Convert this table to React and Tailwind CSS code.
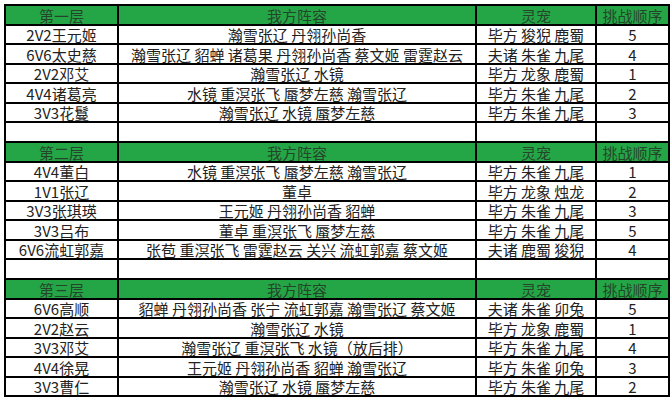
import React from "react";

const floors = [
  {
    title: "第一层",
    rows: [
      ["2V2王元姬", "瀚雪张辽 丹翎孙尚香", "毕方 狻猊 鹿蜀", "5"],
      ["6V6太史慈", "瀚雪张辽 貂蝉 诸葛果 丹翎孙尚香 蔡文姬 雷霆赵云", "夫诸 朱雀 九尾", "4"],
      ["2V2邓艾", "瀚雪张辽 水镜", "毕方 龙象 鹿蜀", "1"],
      ["4V4诸葛亮", "水镜 重溟张飞 蜃梦左慈 瀚雪张辽", "毕方 朱雀 九尾", "2"],
      ["3V3花鬘", "瀚雪张辽 水镜 蜃梦左慈", "毕方 朱雀 九尾", "3"],
    ],
  },
  {
    title: "第二层",
    rows: [
      ["4V4董白", "水镜 重溟张飞 蜃梦左慈 瀚雪张辽", "毕方 朱雀 九尾", "1"],
      ["1V1张辽", "董卓", "毕方 龙象 烛龙", "2"],
      ["3V3张琪瑛", "王元姬 丹翎孙尚香 貂蝉", "毕方 朱雀 九尾", "3"],
      ["3V3吕布", "董卓 重溟张飞 蜃梦左慈", "毕方 朱雀 九尾", "5"],
      ["6V6流虹郭嘉", "张苞 重溟张飞 雷霆赵云 关兴 流虹郭嘉 蔡文姬", "夫诸 鹿蜀 狻猊", "4"],
    ],
  },
  {
    title: "第三层",
    rows: [
      ["6V6高顺", "貂蝉 丹翎孙尚香 张宁 流虹郭嘉 瀚雪张辽 蔡文姬", "夫诸 朱雀 卯兔", "5"],
      ["2V2赵云", "瀚雪张辽 水镜", "毕方 龙象 鹿蜀", "1"],
      ["3V3邓艾", "瀚雪张辽 重溟张飞 水镜（放后排）", "毕方 朱雀 九尾", "4"],
      ["4V4徐晃", "王元姬 丹翎孙尚香 貂蝉 瀚雪张辽", "毕方 朱雀 卯兔", "3"],
      ["3V3曹仁", "瀚雪张辽 水镜 蜃梦左慈", "毕方 朱雀 九尾", "2"],
    ],
  },
];

const cell = "border-2 border-black text-center whitespace-nowrap leading-none p-0 pt-[1px]";

function App() {
  return (
    <div className="w-[670px] h-[401px] bg-white pt-[4px] pl-[4px] font-['Noto_Sans_CJK_SC','Noto_Sans',sans-serif] text-[15px] text-[#222]">
      <table className="border-collapse table-fixed w-[664px]">
        <colgroup>
          <col className="w-[113px]" />
          <col className="w-[358px]" />
          <col className="w-[120px]" />
          <col className="w-[73px]" />
        </colgroup>
        <tbody>
          {floors.map((floor, i) => (
            <React.Fragment key={floor.title}>
              {i > 0 && (
                <tr className="h-[20px]">
                  <td className={cell}></td>
                  <td className={cell}></td>
                  <td className={cell}></td>
                  <td className={cell}></td>
                </tr>
              )}
              <tr className="h-[19.5px] bg-[#25a646] text-[#24452a]">
                <td className={cell}>{floor.title}</td>
                <td className={cell}>我方阵容</td>
                <td className={cell}>灵宠</td>
                <td className={cell}>挑战顺序</td>
              </tr>
              {floor.rows.map((r) => (
                <tr key={r[0]} className="h-[19.5px]">
                  <td className={cell}>{r[0]}</td>
                  <td className={cell}>{r[1]}</td>
                  <td className={cell}>{r[2]}</td>
                  <td className={cell}>{r[3]}</td>
                </tr>
              ))}
            </React.Fragment>
          ))}
        </tbody>
      </table>
    </div>
  );
}

export default App;
